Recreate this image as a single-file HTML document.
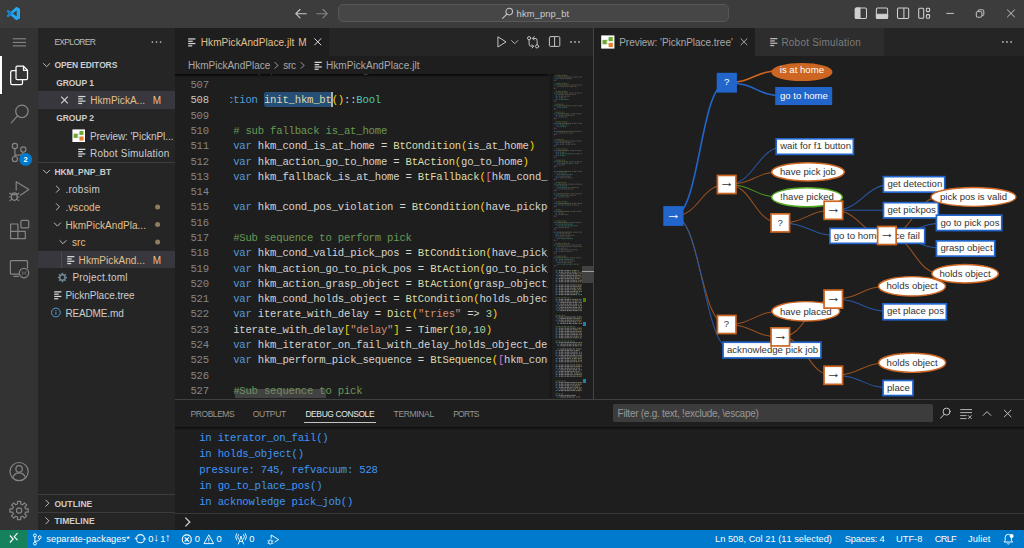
<!DOCTYPE html><html lang="en"><head><meta charset="utf-8"><title>hkm_pnp_bt - Visual Studio Code</title><style>

html,body{margin:0;padding:0;background:#1e1e1e;}
body{width:1024px;height:548px;overflow:hidden;position:relative;font-family:"Liberation Sans",sans-serif;font-kerning:none;}
.b{position:absolute;}
.t{position:absolute;white-space:pre;line-height:20px;height:20px;}
.m{font-family:"Liberation Mono",monospace;font-size:10.6px;letter-spacing:-0.200px;}
svg.ov{position:absolute;left:0;top:0;}
svg text{font-family:"Liberation Sans",sans-serif;}

</style></head><body>
<div class="b" style="left:0.00px;top:0.00px;width:1024.00px;height:28.00px;background:#3c3c3c;"></div>
<div class="b" style="left:0.00px;top:28.00px;width:38.40px;height:501.80px;background:#333333;"></div>
<div class="b" style="left:38.40px;top:28.00px;width:136.60px;height:501.80px;background:#252526;"></div>
<div class="b" style="left:175.00px;top:28.00px;width:849.00px;height:501.80px;background:#1e1e1e;"></div>
<div class="b" style="left:175.00px;top:28.00px;width:418.60px;height:28.00px;background:#252526;"></div>
<div class="b" style="left:594.40px;top:28.00px;width:429.60px;height:28.00px;background:#252526;"></div>
<div class="b" style="left:593.40px;top:28.00px;width:1.10px;height:370.70px;background:#444444;"></div>
<div class="b" style="left:0.00px;top:529.80px;width:1024.00px;height:18.20px;background:#007acc;"></div>
<div class="b" style="left:0.00px;top:529.80px;width:27.20px;height:18.20px;background:#16825d;"></div>
<div class="b" style="left:338.20px;top:3.90px;width:391.20px;height:18.60px;background:#464646;border:1px solid #585858;border-radius:5px;box-sizing:border-box;"></div>
<span class="t" style="left:516.60px;top:3.60px;font-size:9.3px;color:#cccccc;letter-spacing:0.151px;">hkm_pnp_bt</span>
<div class="b" style="left:0.00px;top:56.00px;width:1.70px;height:38.40px;background:#ffffff;"></div>
<span class="t" style="left:54.40px;top:32.30px;font-size:8.5px;color:#bbbbbb;letter-spacing:-0.687px;">EXPLORER</span>
<div class="b" style="left:38.40px;top:91.20px;width:136.60px;height:17.60px;background:#37373d;"></div>
<div class="b" style="left:38.40px;top:250.60px;width:136.60px;height:17.60px;background:#37373d;"></div>
<div class="b" style="left:38.40px;top:162.20px;width:136.60px;height:0.80px;background:#3c3c3c;"></div>
<span class="t" style="left:54.40px;top:55.10px;font-size:8.5px;color:#cccccc;font-weight:700;letter-spacing:-0.119px;">OPEN EDITORS</span>
<span class="t" style="left:56.20px;top:72.70px;font-size:8.5px;color:#cccccc;font-weight:700;letter-spacing:-0.065px;">GROUP 1</span>
<span class="t" style="left:90.30px;top:91.30px;font-size:10.0px;color:#e2c08d;letter-spacing:0.023px;">HkmPickA...</span>
<span class="t" style="left:152.80px;top:91.30px;font-size:10.0px;color:#e2c08d;letter-spacing:1.070px;">M</span>
<span class="t" style="left:56.20px;top:107.90px;font-size:8.5px;color:#cccccc;font-weight:700;letter-spacing:-0.065px;">GROUP 2</span>
<span class="t" style="left:90.00px;top:126.50px;font-size:10.0px;color:#cccccc;letter-spacing:-0.066px;">Preview: 'PicknPl...</span>
<span class="t" style="left:90.00px;top:144.10px;font-size:10.0px;color:#cccccc;letter-spacing:0.215px;">Robot Simulation</span>
<span class="t" style="left:54.40px;top:161.70px;font-size:8.5px;color:#cccccc;font-weight:700;letter-spacing:-0.102px;">HKM_PNP_BT</span>
<span class="t" style="left:65.40px;top:180.30px;font-size:10.0px;color:#cccccc;letter-spacing:0.260px;">.robsim</span>
<span class="t" style="left:65.40px;top:197.90px;font-size:10.0px;color:#e2c08d;letter-spacing:0.077px;">.vscode</span>
<span class="t" style="left:65.40px;top:215.50px;font-size:10.0px;color:#e2c08d;letter-spacing:0.036px;">HkmPickAndPla...</span>
<span class="t" style="left:72.00px;top:233.10px;font-size:10.0px;color:#e2c08d;letter-spacing:0.023px;">src</span>
<div class="b" style="left:61.20px;top:250.60px;width:0.70px;height:17.60px;background:#4a4a4a;"></div>
<span class="t" style="left:78.60px;top:250.70px;font-size:10.0px;color:#e2c08d;letter-spacing:0.064px;">HkmPickAnd...</span>
<span class="t" style="left:152.80px;top:250.70px;font-size:10.0px;color:#e2c08d;letter-spacing:1.070px;">M</span>
<span class="t" style="left:72.40px;top:268.30px;font-size:10.0px;color:#cccccc;letter-spacing:0.217px;">Project.toml</span>
<span class="t" style="left:65.40px;top:285.90px;font-size:10.0px;color:#cccccc;letter-spacing:-0.019px;">PicknPlace.tree</span>
<span class="t" style="left:65.40px;top:303.50px;font-size:10.0px;color:#cccccc;letter-spacing:-0.139px;">README.md</span>
<div class="b" style="left:38.40px;top:494.00px;width:136.60px;height:0.80px;background:#3c3c3c;"></div>
<div class="b" style="left:38.40px;top:511.60px;width:136.60px;height:0.80px;background:#3c3c3c;"></div>
<span class="t" style="left:54.40px;top:493.90px;font-size:8.5px;color:#cccccc;font-weight:700;letter-spacing:0.099px;">OUTLINE</span>
<span class="t" style="left:54.40px;top:511.00px;font-size:8.5px;color:#cccccc;font-weight:700;letter-spacing:0.092px;">TIMELINE</span>
<div class="b" style="left:175.00px;top:28.00px;width:153.60px;height:28.00px;background:#1e1e1e;"></div>
<span class="t" style="left:200.80px;top:33.00px;font-size:10.0px;color:#e2c08d;letter-spacing:0.071px;">HkmPickAndPlace.jlt</span>
<span class="t" style="left:298.20px;top:33.00px;font-size:10.0px;color:#e2c08d;letter-spacing:0.870px;">M</span>
<span class="t" style="left:188.00px;top:55.80px;font-size:10.0px;color:#a9a9a9;">HkmPickAndPlace</span>
<span class="t" style="left:283.20px;top:55.80px;font-size:10.0px;color:#a9a9a9;letter-spacing:-0.310px;">src</span>
<span class="t" style="left:326.00px;top:55.80px;font-size:10.0px;color:#a9a9a9;letter-spacing:0.071px;">HkmPickAndPlace.jlt</span>
<div class="b" style="left:229.6px;top:73.6px;width:318.00px;height:324.80px;overflow:hidden;"><div class="b" style="left:34.34px;top:18.70px;width:67.76px;height:14.4px;background:#264f78;border-radius:2.4px;"></div><div class="b" style="left:101.90px;top:18.70px;width:1.5px;height:14.4px;background:#aeafad;"></div><span class="t m" style="left:-21.10px;top:-13.81px;"><span style="color:#d4d4d4">    hkm_pnp_tree = nothing   # set in init_hkm_bt</span></span><span class="t m" style="left:-21.10px;top:16.77px;"><span style="color:#569cd6">function</span><span style="color:#d4d4d4"> </span><span style="color:#dcdcaa">init_hkm_bt</span><span style="color:#ffd700">()</span><span style="color:#d4d4d4">::</span><span style="color:#4ec9b0">Bool</span></span><span class="t m" style="left:-21.10px;top:47.35px;"><span style="color:#6a9955">    # sub fallback is_at_home</span></span><span class="t m" style="left:-21.10px;top:62.64px;"><span style="color:#569cd6">    var</span><span style="color:#d4d4d4"> hkm_cond_is_at_home = </span><span style="color:#dcdcaa">BtCondition</span><span style="color:#ffd700">(</span><span style="color:#d4d4d4">is_at_home</span><span style="color:#ffd700">)</span></span><span class="t m" style="left:-21.10px;top:77.93px;"><span style="color:#569cd6">    var</span><span style="color:#d4d4d4"> hkm_action_go_to_home = </span><span style="color:#dcdcaa">BtAction</span><span style="color:#ffd700">(</span><span style="color:#d4d4d4">go_to_home</span><span style="color:#ffd700">)</span></span><span class="t m" style="left:-21.10px;top:93.22px;"><span style="color:#569cd6">    var</span><span style="color:#d4d4d4"> hkm_fallback_is_at_home = </span><span style="color:#dcdcaa">BtFallback</span><span style="color:#ffd700">(</span><span style="color:#da70d6">[</span><span style="color:#d4d4d4">hkm_cond_is_at_home, hkm_action_go_to_home</span><span style="color:#da70d6">]</span><span style="color:#ffd700">)</span></span><span class="t m" style="left:-21.10px;top:123.80px;"><span style="color:#569cd6">    var</span><span style="color:#d4d4d4"> hkm_cond_pos_violation = </span><span style="color:#dcdcaa">BtCondition</span><span style="color:#ffd700">(</span><span style="color:#d4d4d4">have_pickpos_violation</span><span style="color:#ffd700">)</span></span><span class="t m" style="left:-21.10px;top:154.38px;"><span style="color:#6a9955">    #Sub sequence to perform pick</span></span><span class="t m" style="left:-21.10px;top:169.67px;"><span style="color:#569cd6">    var</span><span style="color:#d4d4d4"> hkm_cond_valid_pick_pos = </span><span style="color:#dcdcaa">BtCondition</span><span style="color:#ffd700">(</span><span style="color:#d4d4d4">have_pick_pos_is_valid</span><span style="color:#ffd700">)</span></span><span class="t m" style="left:-21.10px;top:184.96px;"><span style="color:#569cd6">    var</span><span style="color:#d4d4d4"> hkm_action_go_to_pick_pos = </span><span style="color:#dcdcaa">BtAction</span><span style="color:#ffd700">(</span><span style="color:#d4d4d4">go_to_pick_pos</span><span style="color:#ffd700">)</span></span><span class="t m" style="left:-21.10px;top:200.25px;"><span style="color:#569cd6">    var</span><span style="color:#d4d4d4"> hkm_action_grasp_object = </span><span style="color:#dcdcaa">BtAction</span><span style="color:#ffd700">(</span><span style="color:#d4d4d4">grasp_object_at_pick</span><span style="color:#ffd700">)</span></span><span class="t m" style="left:-21.10px;top:215.54px;"><span style="color:#569cd6">    var</span><span style="color:#d4d4d4"> hkm_cond_holds_object = </span><span style="color:#dcdcaa">BtCondition</span><span style="color:#ffd700">(</span><span style="color:#d4d4d4">holds_object_now</span><span style="color:#ffd700">)</span></span><span class="t m" style="left:-21.10px;top:230.83px;"><span style="color:#569cd6">    var</span><span style="color:#d4d4d4"> iterate_with_delay = </span><span style="color:#dcdcaa">Dict</span><span style="color:#ffd700">(</span><span style="color:#ce9178">"tries"</span><span style="color:#d4d4d4"> =&gt; </span><span style="color:#b5cea8">3</span><span style="color:#ffd700">)</span></span><span class="t m" style="left:-21.10px;top:246.12px;"><span style="color:#d4d4d4">    iterate_with_delay</span><span style="color:#ffd700">[</span><span style="color:#ce9178">"delay"</span><span style="color:#ffd700">]</span><span style="color:#d4d4d4"> = </span><span style="color:#dcdcaa">Timer</span><span style="color:#ffd700">(</span><span style="color:#b5cea8">10</span><span style="color:#d4d4d4">,</span><span style="color:#b5cea8">10</span><span style="color:#ffd700">)</span></span><span class="t m" style="left:-21.10px;top:261.41px;"><span style="color:#569cd6">    var</span><span style="color:#d4d4d4"> hkm_iterator_on_fail_with_delay_holds_object_delayed = </span><span style="color:#dcdcaa">BtIterator</span><span style="color:#ffd700">(</span><span style="color:#d4d4d4">x</span><span style="color:#ffd700">)</span></span><span class="t m" style="left:-21.10px;top:276.70px;"><span style="color:#569cd6">    var</span><span style="color:#d4d4d4"> hkm_perform_pick_sequence = </span><span style="color:#dcdcaa">BtSequence</span><span style="color:#ffd700">(</span><span style="color:#da70d6">[</span><span style="color:#d4d4d4">hkm_cond_valid_pick_pos, hkm_action_go_to_pick_pos</span><span style="color:#da70d6">]</span><span style="color:#ffd700">)</span></span><span class="t m" style="left:-21.10px;top:307.28px;"><span style="color:#6a9955">    #Sub sequence to pick</span></span></div>
<span class="t" style="left:190.40px;top:75.08px;font-size:10.6px;color:#858585;font-family:'Liberation Mono',monospace;letter-spacing:-0.200px;">507</span>
<span class="t" style="left:190.40px;top:90.37px;font-size:10.6px;color:#c6c6c6;font-family:'Liberation Mono',monospace;letter-spacing:-0.200px;">508</span>
<span class="t" style="left:190.40px;top:105.66px;font-size:10.6px;color:#858585;font-family:'Liberation Mono',monospace;letter-spacing:-0.200px;">509</span>
<span class="t" style="left:190.40px;top:120.95px;font-size:10.6px;color:#858585;font-family:'Liberation Mono',monospace;letter-spacing:-0.200px;">510</span>
<span class="t" style="left:190.40px;top:136.24px;font-size:10.6px;color:#858585;font-family:'Liberation Mono',monospace;letter-spacing:-0.200px;">511</span>
<span class="t" style="left:190.40px;top:151.53px;font-size:10.6px;color:#858585;font-family:'Liberation Mono',monospace;letter-spacing:-0.200px;">512</span>
<span class="t" style="left:190.40px;top:166.82px;font-size:10.6px;color:#858585;font-family:'Liberation Mono',monospace;letter-spacing:-0.200px;">513</span>
<span class="t" style="left:190.40px;top:182.11px;font-size:10.6px;color:#858585;font-family:'Liberation Mono',monospace;letter-spacing:-0.200px;">514</span>
<span class="t" style="left:190.40px;top:197.40px;font-size:10.6px;color:#858585;font-family:'Liberation Mono',monospace;letter-spacing:-0.200px;">515</span>
<span class="t" style="left:190.40px;top:212.69px;font-size:10.6px;color:#858585;font-family:'Liberation Mono',monospace;letter-spacing:-0.200px;">516</span>
<span class="t" style="left:190.40px;top:227.98px;font-size:10.6px;color:#858585;font-family:'Liberation Mono',monospace;letter-spacing:-0.200px;">517</span>
<span class="t" style="left:190.40px;top:243.27px;font-size:10.6px;color:#858585;font-family:'Liberation Mono',monospace;letter-spacing:-0.200px;">518</span>
<span class="t" style="left:190.40px;top:258.56px;font-size:10.6px;color:#858585;font-family:'Liberation Mono',monospace;letter-spacing:-0.200px;">519</span>
<span class="t" style="left:190.40px;top:273.85px;font-size:10.6px;color:#858585;font-family:'Liberation Mono',monospace;letter-spacing:-0.200px;">520</span>
<span class="t" style="left:190.40px;top:289.14px;font-size:10.6px;color:#858585;font-family:'Liberation Mono',monospace;letter-spacing:-0.200px;">521</span>
<span class="t" style="left:190.40px;top:304.43px;font-size:10.6px;color:#858585;font-family:'Liberation Mono',monospace;letter-spacing:-0.200px;">522</span>
<span class="t" style="left:190.40px;top:319.72px;font-size:10.6px;color:#858585;font-family:'Liberation Mono',monospace;letter-spacing:-0.200px;">523</span>
<span class="t" style="left:190.40px;top:335.01px;font-size:10.6px;color:#858585;font-family:'Liberation Mono',monospace;letter-spacing:-0.200px;">524</span>
<span class="t" style="left:190.40px;top:350.30px;font-size:10.6px;color:#858585;font-family:'Liberation Mono',monospace;letter-spacing:-0.200px;">525</span>
<span class="t" style="left:190.40px;top:365.59px;font-size:10.6px;color:#858585;font-family:'Liberation Mono',monospace;letter-spacing:-0.200px;">526</span>
<span class="t" style="left:190.40px;top:380.88px;font-size:10.6px;color:#858585;font-family:'Liberation Mono',monospace;letter-spacing:-0.200px;">527</span>
<div class="b" style="left:175px;top:73.6px;width:377.6px;height:3px;background:linear-gradient(#000000cc,#00000000);"></div>
<div class="b" style="left:235.00px;top:389.00px;width:91.40px;height:9.40px;background:rgba(121,121,121,0.4);"></div>
<div class="b" style="left:547.6px;top:73.6px;width:4.4px;height:324.8px;background:linear-gradient(90deg,#1e1e1e,#161616);"></div>
<div class="b" style="left:582.40px;top:266.40px;width:11.20px;height:16.40px;background:#424242;"></div>
<div class="b" style="left:582.40px;top:270.60px;width:11.20px;height:1.00px;background:#a0a0a0;"></div>
<div class="b" style="left:583.20px;top:298.40px;width:2.80px;height:4.00px;background:#487e02;"></div>
<div class="b" style="left:583.20px;top:321.60px;width:2.80px;height:4.00px;background:#1b81a8;"></div>
<div class="b" style="left:583.20px;top:379.00px;width:2.80px;height:4.00px;background:#1b81a8;"></div>
<div class="b" style="left:594.40px;top:28.00px;width:160.90px;height:28.00px;background:#1e1e1e;"></div>
<span class="t" style="left:619.20px;top:32.90px;font-size:10.0px;color:#a8a8a8;letter-spacing:-0.031px;">Preview: 'PicknPlace.tree'</span>
<div class="b" style="left:755.30px;top:28.00px;width:128.30px;height:28.00px;background:#2d2d2d;"></div>
<span class="t" style="left:781.40px;top:32.90px;font-size:10.0px;color:#7b7b7b;letter-spacing:0.215px;">Robot Simulation</span>
<svg class="ov" style="left:594.4px;top:56px" width="429.6" height="342.4" viewBox="594.4 56 429.6 342.4"><g fill="none"><path d="M673.8 216.0 C700.5 216.0 700.5 82.7 727.2 82.7" stroke="#2266cc" stroke-width="1.6"/><path d="M673.8 216.0 C700.5 216.0 700.5 184.5 727.1 184.5" stroke="#9a501f" stroke-width="1.05"/><path d="M673.8 216.0 C700.5 216.0 700.5 324.5 727.1 324.5" stroke="#9a501f" stroke-width="1.05"/><path d="M673.8 216.0 C703.2 216.0 703.2 350.1 732.7 350.1" stroke="#2857a4" stroke-width="1.05"/><path d="M727.2 82.7 C754.7 82.7 754.7 70.5 782.1 70.5" stroke="#cc6622" stroke-width="1.6"/><path d="M727.2 82.7 C756.5 82.7 756.5 96.0 785.7 96.0" stroke="#2266cc" stroke-width="1.6"/><path d="M727.1 184.5 C756.5 184.5 756.5 146.6 785.9 146.6" stroke="#2857a4" stroke-width="1.05"/><path d="M727.1 184.5 C754.4 184.5 754.4 171.9 781.7 171.9" stroke="#9a501f" stroke-width="1.05"/><path d="M727.1 184.5 C754.4 184.5 754.4 197.3 781.7 197.3" stroke="#4c9a1e" stroke-width="1.05"/><path d="M727.1 184.5 C753.9 184.5 753.9 222.9 780.7 222.9" stroke="#9a501f" stroke-width="1.05"/><path d="M780.7 222.9 C807.2 222.9 807.2 210.3 833.8 210.3" stroke="#9a501f" stroke-width="1.05"/><path d="M780.7 222.9 C810.1 222.9 810.1 235.8 839.5 235.8" stroke="#2857a4" stroke-width="1.05"/><path d="M833.8 210.3 C863.5 210.3 863.5 184.4 893.1 184.4" stroke="#2857a4" stroke-width="1.05"/><path d="M833.8 210.3 C863.5 210.3 863.5 210.3 893.1 210.3" stroke="#2857a4" stroke-width="1.05"/><path d="M833.8 210.3 C860.6 210.3 860.6 235.5 887.3 235.5" stroke="#9a501f" stroke-width="1.05"/><path d="M887.3 235.5 C914.2 235.5 914.2 196.9 941.1 196.9" stroke="#9a501f" stroke-width="1.05"/><path d="M887.3 235.5 C916.7 235.5 916.7 222.9 946.1 222.9" stroke="#2857a4" stroke-width="1.05"/><path d="M887.3 235.5 C916.7 235.5 916.7 248.5 946.1 248.5" stroke="#2857a4" stroke-width="1.05"/><path d="M887.3 235.5 C914.6 235.5 914.6 273.7 941.9 273.7" stroke="#9a501f" stroke-width="1.05"/><path d="M727.1 324.5 C754.5 324.5 754.5 311.3 781.9 311.3" stroke="#9a501f" stroke-width="1.05"/><path d="M727.1 324.5 C753.9 324.5 753.9 336.9 780.7 336.9" stroke="#9a501f" stroke-width="1.05"/><path d="M780.7 336.9 C807.2 336.9 807.2 299.1 833.7 299.1" stroke="#9a501f" stroke-width="1.05"/><path d="M780.7 336.9 C807.2 336.9 807.2 375.3 833.7 375.3" stroke="#9a501f" stroke-width="1.05"/><path d="M833.7 299.1 C861.1 299.1 861.1 286.3 888.5 286.3" stroke="#9a501f" stroke-width="1.05"/><path d="M833.7 299.1 C863.2 299.1 863.2 311.8 892.7 311.8" stroke="#2857a4" stroke-width="1.05"/><path d="M833.7 375.3 C861.2 375.3 861.2 362.8 888.7 362.8" stroke="#9a501f" stroke-width="1.05"/><path d="M833.7 375.3 C863.2 375.3 863.2 388.0 892.7 388.0" stroke="#2857a4" stroke-width="1.05"/></g><rect x="664.55" y="206.95" width="18.50" height="18.10" fill="#2266cc" stroke="#2266cc" stroke-width="1.7"/><text x="673.80" y="218.90" font-size="14.7" fill="#ffffff" text-anchor="middle">→</text><rect x="717.95" y="73.65" width="18.50" height="18.10" fill="#2266cc" stroke="#2266cc" stroke-width="1.7"/><text x="727.00" y="85.50" font-size="9.6" fill="#ffffff" text-anchor="middle">?</text><ellipse cx="802.30" cy="72.10" rx="29.88" ry="8.27" fill="#cc6622" stroke="#cc6622" stroke-width="1.45"/><text x="802.30" y="72.70" font-size="9.6" fill="#ffffff" text-anchor="middle">is at home</text><rect x="776.45" y="87.85" width="55.30" height="16.30" fill="#2266cc" stroke="#2266cc" stroke-width="1.7"/><text x="780.40" y="98.70" font-size="9.6" fill="#ffffff">go to home</text><rect x="717.85" y="175.45" width="18.50" height="18.10" fill="#ffffff" stroke="#cc6622" stroke-width="1.7"/><text x="727.10" y="187.40" font-size="14.7" fill="#333333" text-anchor="middle">→</text><rect x="776.65" y="138.85" width="77.10" height="15.50" fill="#ffffff" stroke="#2266cc" stroke-width="1.7"/><text x="780.60" y="149.30" font-size="9.6" fill="#333333">wait for f1 button</text><ellipse cx="808.40" cy="171.90" rx="36.38" ry="9.07" fill="#ffffff" stroke="#cc6622" stroke-width="1.45"/><text x="808.40" y="175.40" font-size="9.6" fill="#333333" text-anchor="middle">have pick job</text><ellipse cx="807.40" cy="197.30" rx="35.38" ry="9.48" fill="#ffffff" stroke="#55aa22" stroke-width="1.45"/><text x="807.40" y="200.10" font-size="9.6" fill="#333333" text-anchor="middle">!have picked</text><rect x="771.45" y="213.85" width="18.50" height="18.10" fill="#ffffff" stroke="#cc6622" stroke-width="1.7"/><text x="780.50" y="225.70" font-size="9.6" fill="#333333" text-anchor="middle">?</text><rect x="824.55" y="201.25" width="18.50" height="18.10" fill="#ffffff" stroke="#cc6622" stroke-width="1.7"/><text x="833.80" y="213.20" font-size="14.7" fill="#333333" text-anchor="middle">→</text><rect x="883.85" y="176.65" width="61.30" height="15.50" fill="#ffffff" stroke="#2266cc" stroke-width="1.7"/><text x="887.80" y="187.10" font-size="9.6" fill="#333333">get detection</text><rect x="883.85" y="202.65" width="54.90" height="15.30" fill="#ffffff" stroke="#2266cc" stroke-width="1.7"/><text x="887.80" y="213.00" font-size="9.6" fill="#333333">get pickpos</text><rect x="830.25" y="228.35" width="55.30" height="15.00" fill="#ffffff" stroke="#2266cc" stroke-width="1.7"/><text x="834.20" y="238.55" font-size="9.6" fill="#333333">go to home</text><rect x="878.45" y="228.35" width="46.70" height="15.00" fill="#ffffff" stroke="#2266cc" stroke-width="1.7"/><text x="882.40" y="238.55" font-size="9.6" fill="#333333">place fail</text><rect x="878.05" y="226.45" width="18.50" height="18.10" fill="#ffffff" stroke="#cc6622" stroke-width="1.7"/><text x="887.30" y="238.40" font-size="14.7" fill="#333333" text-anchor="middle">→</text><ellipse cx="973.90" cy="196.90" rx="42.47" ry="9.48" fill="#ffffff" stroke="#cc6622" stroke-width="1.45"/><text x="973.90" y="200.40" font-size="9.6" fill="#333333" text-anchor="middle">pick pos is valid</text><rect x="936.85" y="215.15" width="65.30" height="15.40" fill="#ffffff" stroke="#2266cc" stroke-width="1.7"/><text x="940.80" y="225.55" font-size="9.6" fill="#333333">go to pick pos</text><rect x="936.85" y="240.85" width="58.30" height="15.30" fill="#ffffff" stroke="#2266cc" stroke-width="1.7"/><text x="940.80" y="251.20" font-size="9.6" fill="#333333">grasp object</text><ellipse cx="965.50" cy="273.70" rx="33.28" ry="9.28" fill="#ffffff" stroke="#cc6622" stroke-width="1.45"/><text x="965.50" y="277.20" font-size="9.6" fill="#333333" text-anchor="middle">holds object</text><rect x="717.85" y="315.45" width="18.50" height="18.10" fill="#ffffff" stroke="#cc6622" stroke-width="1.7"/><text x="726.90" y="327.30" font-size="9.6" fill="#333333" text-anchor="middle">?</text><ellipse cx="806.20" cy="311.30" rx="33.98" ry="9.68" fill="#ffffff" stroke="#cc6622" stroke-width="1.45"/><text x="806.20" y="314.80" font-size="9.6" fill="#333333" text-anchor="middle">have placed</text><rect x="723.45" y="342.25" width="97.90" height="15.70" fill="#ffffff" stroke="#2266cc" stroke-width="1.7"/><text x="727.40" y="352.80" font-size="9.6" fill="#333333">acknowledge pick job</text><rect x="771.45" y="327.85" width="18.50" height="18.10" fill="#ffffff" stroke="#cc6622" stroke-width="1.7"/><text x="780.70" y="339.80" font-size="14.7" fill="#333333" text-anchor="middle">→</text><rect x="824.45" y="290.05" width="18.50" height="18.10" fill="#ffffff" stroke="#cc6622" stroke-width="1.7"/><text x="833.70" y="302.00" font-size="14.7" fill="#333333" text-anchor="middle">→</text><ellipse cx="912.40" cy="286.30" rx="33.57" ry="9.68" fill="#ffffff" stroke="#cc6622" stroke-width="1.45"/><text x="912.40" y="289.00" font-size="9.6" fill="#333333" text-anchor="middle">holds object</text><rect x="883.45" y="303.85" width="63.30" height="15.90" fill="#ffffff" stroke="#2266cc" stroke-width="1.7"/><text x="887.40" y="314.50" font-size="9.6" fill="#333333">get place pos</text><rect x="824.45" y="366.25" width="18.50" height="18.10" fill="#ffffff" stroke="#cc6622" stroke-width="1.7"/><text x="833.70" y="378.20" font-size="14.7" fill="#333333" text-anchor="middle">→</text><ellipse cx="912.60" cy="362.80" rx="33.57" ry="9.58" fill="#ffffff" stroke="#cc6622" stroke-width="1.45"/><text x="912.60" y="366.30" font-size="9.6" fill="#333333" text-anchor="middle">holds object</text><rect x="883.45" y="380.45" width="29.90" height="15.10" fill="#ffffff" stroke="#2266cc" stroke-width="1.7"/><text x="887.40" y="390.70" font-size="9.6" fill="#333333">place</text></svg>
<div class="b" style="left:175.00px;top:398.70px;width:849.00px;height:0.80px;background:#404040;"></div>
<span class="t" style="left:190.60px;top:404.40px;font-size:8.5px;color:#969696;letter-spacing:-0.454px;">PROBLEMS</span>
<span class="t" style="left:252.80px;top:404.40px;font-size:8.5px;color:#969696;letter-spacing:-0.290px;">OUTPUT</span>
<span class="t" style="left:305.40px;top:404.40px;font-size:8.5px;color:#e7e7e7;letter-spacing:-0.412px;">DEBUG CONSOLE</span>
<span class="t" style="left:393.60px;top:404.40px;font-size:8.5px;color:#969696;letter-spacing:-0.347px;">TERMINAL</span>
<span class="t" style="left:453.20px;top:404.40px;font-size:8.5px;color:#969696;letter-spacing:-0.736px;">PORTS</span>
<div class="b" style="left:304.00px;top:422.10px;width:72.00px;height:0.80px;background:#c4c4c4;"></div>
<div class="b" style="left:612.60px;top:404.20px;width:320.40px;height:18.00px;background:#3c3c3c;border-radius:1.5px;"></div>
<span class="t" style="left:617.60px;top:404.30px;font-size:10.0px;color:#989898;letter-spacing:-0.260px;">Filter (e.g. text, !exclude, \escape)</span>
<div class="b" style="left:175px;top:427.2px;width:849px;height:3px;background:linear-gradient(#00000099,#00000000);"></div>
<span class="t" style="left:199.20px;top:427.88px;font-size:10.6px;color:#3f96f6;font-family:'Liberation Mono',monospace;letter-spacing:-0.200px;">in iterator_on_fail()</span>
<span class="t" style="left:199.20px;top:443.98px;font-size:10.6px;color:#3f96f6;font-family:'Liberation Mono',monospace;letter-spacing:-0.200px;">in holds_object()</span>
<span class="t" style="left:199.20px;top:460.08px;font-size:10.6px;color:#3f96f6;font-family:'Liberation Mono',monospace;letter-spacing:-0.200px;">pressure: 745, refvacuum: 528</span>
<span class="t" style="left:199.20px;top:476.18px;font-size:10.6px;color:#3f96f6;font-family:'Liberation Mono',monospace;letter-spacing:-0.200px;">in go_to_place_pos()</span>
<span class="t" style="left:199.20px;top:492.28px;font-size:10.6px;color:#3f96f6;font-family:'Liberation Mono',monospace;letter-spacing:-0.200px;">in acknowledge pick_job()</span>
<div class="b" style="left:175.00px;top:513.10px;width:849.00px;height:0.80px;background:#3a3a3a;"></div>
<span class="t" style="left:46.20px;top:529.40px;font-size:9.3px;color:#ffffff;letter-spacing:0.060px;">separate-packages*</span>
<span class="t" style="left:148.20px;top:529.40px;font-size:9.3px;color:#ffffff;">0</span>
<span class="t" style="left:153.60px;top:527.40px;font-size:11px;color:#ffffff;font-weight:700;">↓</span>
<span class="t" style="left:160.20px;top:529.40px;font-size:9.3px;color:#ffffff;">1</span>
<span class="t" style="left:165.00px;top:527.40px;font-size:11px;color:#ffffff;font-weight:700;">↑</span>
<span class="t" style="left:194.80px;top:529.40px;font-size:9.3px;color:#ffffff;">0</span>
<span class="t" style="left:216.60px;top:529.40px;font-size:9.3px;color:#ffffff;">0</span>
<span class="t" style="left:249.20px;top:529.40px;font-size:9.3px;color:#ffffff;">0</span>
<span class="t" style="left:715.00px;top:529.40px;font-size:9.3px;color:#ffffff;letter-spacing:0.006px;">Ln 508, Col 21 (11 selected)</span>
<span class="t" style="left:844.80px;top:529.40px;font-size:9.3px;color:#ffffff;letter-spacing:-0.196px;">Spaces: 4</span>
<span class="t" style="left:896.00px;top:529.40px;font-size:9.3px;color:#ffffff;letter-spacing:0.011px;">UTF-8</span>
<span class="t" style="left:934.80px;top:529.40px;font-size:9.3px;color:#ffffff;letter-spacing:-0.771px;">CRLF</span>
<span class="t" style="left:968.00px;top:529.40px;font-size:9.3px;color:#ffffff;letter-spacing:0.115px;">Juliet</span>
<svg class="ov" width="1024" height="548" viewBox="0 0 1024 548">
<g transform="translate(6.8,7) scale(0.55)"><path fill="#23a8f2" d="M23.15 2.587L18.21.21a1.494 1.494 0 0 0-1.705.29l-9.46 8.63-4.12-3.128a.999.999 0 0 0-1.276.057L.327 7.261A1 1 0 0 0 .326 8.74L3.899 12 .326 15.26a1 1 0 0 0 .001 1.479L1.65 17.94a.999.999 0 0 0 1.276.057l4.12-3.128 9.46 8.63a1.492 1.492 0 0 0 1.704.29l4.942-2.377A1.5 1.5 0 0 0 24 20.06V3.939a1.5 1.5 0 0 0-.85-1.352zm-5.146 14.861L10.826 12l7.178-5.448v10.896z"/><path fill="#1a7fd0" d="M7.045 9.13l-4.12-3.128a.999.999 0 0 0-1.276.057L.327 7.261A1 1 0 0 0 .326 8.74L3.899 12 .326 15.26a1 1 0 0 0 .001 1.479L1.65 17.94a.999.999 0 0 0 1.276.057l4.12-3.128L10.826 12z"/></g>
<path d="M306.2 13.7 H295.8 M300.0 9.5 L295.8 13.7 L300.0 17.9" fill="none" stroke="#c8c8c8" stroke-width="1.15" stroke-linecap="round" stroke-linejoin="round"/>
<path d="M316.8 13.7 H327.2 M323.0 9.5 L327.2 13.7 L323.0 17.9" fill="none" stroke="#858585" stroke-width="1.15" stroke-linecap="round" stroke-linejoin="round"/>
<g fill="none" stroke="#c8c8c8" stroke-width="1.05" stroke-linecap="round"><circle cx="509.2" cy="11.6" r="3.3"/><path d="M506.8 14.1 L502.6 18.4"/></g>
<g fill="none" stroke="#d0d0d0" stroke-width="1.05" stroke-linejoin="round"><rect x="855.3" y="8" width="11.2" height="10.4" rx="1.2"/><path d="M855.3 9 a1 1 0 0 1 1 -1 h3.7 v10.4 h-3.7 a1 1 0 0 1 -1 -1 z" fill="#d0d0d0"/><rect x="876.4" y="8" width="11.2" height="10.4" rx="1.2"/><path d="M876.4 14.2 h11.2 v3.2 a1 1 0 0 1 -1 1 h-9.2 a1 1 0 0 1 -1 -1 z" fill="#d0d0d0"/><rect x="897.5" y="8" width="11.2" height="10.4" rx="1.2"/><path d="M903.9 8 v10.4"/><rect x="918.7" y="8.2" width="5" height="10" rx="1"/><rect x="926.4" y="8.2" width="3.2" height="3.4" rx="0.8"/><rect x="926.4" y="14.6" width="3.2" height="3.6" rx="0.8"/></g>
<g fill="none" stroke="#cfcfcf" stroke-width="0.95"><path d="M946.4 13.4 H953.8"/><rect x="976.3" y="11.6" width="5.6" height="5.6" rx="1.2"/><path d="M978 11.6 v-0.6 a1.2 1.2 0 0 1 1.2 -1.2 h3.4 a1.2 1.2 0 0 1 1.2 1.2 v3.4 a1.2 1.2 0 0 1 -1.2 1.2 h-0.7"/><path d="M1007.2 9.6 L1014.8 17.2 M1014.8 9.6 L1007.2 17.2"/></g>
<path d="M12.8 38.8 H26 M12.8 42.4 H26 M12.8 45.9 H26" stroke="#9c9c9c" stroke-width="0.88" fill="none"/>
<g fill="none" stroke="#ffffff" stroke-width="1.25" stroke-linejoin="round" stroke-linecap="round"><path d="M17.2 66.2 h6.3 l4 4 v8.3 a1.2 1.2 0 0 1 -1.2 1.2 h-9.1 a1.2 1.2 0 0 1 -1.2 -1.2 v-11.1 a1.2 1.2 0 0 1 1.2 -1.2 z"/><path d="M23.5 66.4 v3.9 h3.9"/><path d="M16 70.6 h-3.7 a1.6 1.6 0 0 0 -1.6 1.6 v10.8 a1.6 1.6 0 0 0 1.6 1.6 h8.6 a1.6 1.6 0 0 0 1.6 -1.6 v-3.2"/></g>
<g fill="none" stroke="#858585" stroke-width="1.25" stroke-linecap="round"><circle cx="21.9" cy="111.3" r="6.2"/><path d="M17.6 115.9 L11.2 122.9"/></g>
<g fill="none" stroke="#858585" stroke-width="1.2"><circle cx="14.9" cy="146" r="2.6"/><circle cx="23.3" cy="149.4" r="2.6"/><circle cx="14.9" cy="159.1" r="2.6"/><path d="M14.9 148.6 V156.5 M23.3 152 c0 3 -3 3.2 -8.4 3.2"/></g>
<circle cx="25.7" cy="159.4" r="6.4" fill="#007acc"/>
<text x="25.7" y="162.1" font-size="7.6" font-weight="700" fill="#fff" text-anchor="middle">2</text>
<g fill="none" stroke="#858585" stroke-width="1.2" stroke-linejoin="round" stroke-linecap="round"><path d="M16.2 190 V181.8 L28.8 189.6 L20.4 195.2"/><ellipse cx="14.3" cy="196.6" rx="2.9" ry="3.7"/><path d="M11.6 194.6 h5.4 M9.8 193.2 l1.8 1.6 M18.8 193.2 l-1.8 1.6 M9.4 197 h2 M17.2 197 h2 M9.9 200.6 l1.9 -1.5 M18.7 200.6 l-1.9 -1.5"/></g>
<g fill="none" stroke="#858585" stroke-width="1.2" stroke-linejoin="round"><rect x="20.9" y="220.3" width="7.8" height="7.6" rx="1"/><path d="M10.6 224 h7.3 v7.3 h7.4 v7.4 h-14.7 z M10.6 231.3 h7.3 v7.4"/></g>
<g fill="none" stroke="#858585" stroke-width="1.2" stroke-linejoin="round" stroke-linecap="round"><path d="M19.4 274.2 h-8 a1 1 0 0 1 -1 -1 v-11.5 a1 1 0 0 1 1 -1 h15.1 a1 1 0 0 1 1 1 v6.2"/><path d="M13.8 276.3 h4.6"/><circle cx="24" cy="273.1" r="4.7"/><path d="M22.1 271.6 l1.3 1.5 l-1.3 1.5 M25.9 271.6 l-1.3 1.5 l1.3 1.5" stroke-width="0.8"/></g>
<g fill="none" stroke="#858585" stroke-width="1.2"><circle cx="19.1" cy="471.6" r="9.1"/><circle cx="19.1" cy="468.9" r="3.2"/><path d="M12.7 477.9 c1.2 -3.6 3.6 -5 6.4 -5 s5.2 1.4 6.4 5"/></g>
<g fill="none" stroke="#858585" stroke-width="1.2" stroke-linejoin="round"><path d="M17.50 501.34 L20.70 501.34 L20.66 503.99 L22.60 504.79 L24.45 502.89 L26.71 505.15 L24.81 507.00 L25.61 508.94 L28.26 508.90 L28.26 512.10 L25.61 512.06 L24.81 514.00 L26.71 515.85 L24.45 518.11 L22.60 516.21 L20.66 517.01 L20.70 519.66 L17.50 519.66 L17.54 517.01 L15.60 516.21 L13.75 518.11 L11.49 515.85 L13.39 514.00 L12.59 512.06 L9.94 512.10 L9.94 508.90 L12.59 508.94 L13.39 507.00 L11.49 505.15 L13.75 502.89 L15.60 504.79 L17.54 503.99 Z"/><circle cx="19.1" cy="510.5" r="2.6"/></g>
<g fill="#c5c5c5"><circle cx="152.4" cy="42" r="0.85"/><circle cx="156.5" cy="42" r="0.85"/><circle cx="160.6" cy="42" r="0.85"/></g>
<path d="M43.20 63.30 L46.60 66.70 L50.00 63.30" fill="none" stroke="#c5c5c5" stroke-width="0.95"/>
<path d="M61.2 96.70 l6.6 6.6 M67.8 96.70 l-6.6 6.6" stroke="#d4d4d4" stroke-width="1.15" fill="none"/>
<path d="M78.20 96.55 h7.2" stroke="#d4d7d6" stroke-width="1.25" fill="none"/>
<path d="M78.20 98.85 h4.6" stroke="#d4d7d6" stroke-width="1.25" fill="none"/>
<path d="M78.20 101.15 h7.2" stroke="#d4d7d6" stroke-width="1.25" fill="none"/>
<path d="M78.20 103.45 h4.0" stroke="#d4d7d6" stroke-width="1.25" fill="none"/>
<g transform="translate(72.4,129.4) scale(0.7875)"><rect x="0" y="0" width="16" height="16" fill="#ffffff"/><path d="M6 8.2 L9 4.5 M6 8.2 L9 11.5" stroke="#b8b8b8" stroke-width="0.9" fill="none"/><rect x="1.6" y="5.4" width="5" height="5.4" fill="#6aaa2e"/><rect x="9" y="2" width="5" height="5" fill="#6aaa2e"/><rect x="9" y="9" width="5.2" height="5.2" fill="#e2802f"/></g>
<path d="M78.20 149.35 h7.2" stroke="#d4d7d6" stroke-width="1.25" fill="none"/>
<path d="M78.20 151.65 h4.6" stroke="#d4d7d6" stroke-width="1.25" fill="none"/>
<path d="M78.20 153.95 h7.2" stroke="#d4d7d6" stroke-width="1.25" fill="none"/>
<path d="M78.20 156.25 h4.0" stroke="#d4d7d6" stroke-width="1.25" fill="none"/>
<path d="M43.20 169.90 L46.60 173.30 L50.00 169.90" fill="none" stroke="#c5c5c5" stroke-width="0.95"/>
<path d="M56.10 185.80 L59.50 189.20 L56.10 192.60" fill="none" stroke="#c5c5c5" stroke-width="0.95"/>
<path d="M56.10 203.40 L59.50 206.80 L56.10 210.20" fill="none" stroke="#c5c5c5" stroke-width="0.95"/>
<circle cx="157.6" cy="206.90" r="2.5" fill="#8f7d61"/>
<path d="M54.00 222.70 L57.40 226.10 L60.80 222.70" fill="none" stroke="#c5c5c5" stroke-width="0.95"/>
<circle cx="157.6" cy="224.50" r="2.5" fill="#8f7d61"/>
<path d="M59.60 240.30 L63.00 243.70 L66.40 240.30" fill="none" stroke="#c5c5c5" stroke-width="0.95"/>
<circle cx="157.6" cy="242.10" r="2.5" fill="#8f7d61"/>
<path d="M67.20 256.65 h7.2" stroke="#d4d7d6" stroke-width="1.25" fill="none"/>
<path d="M67.20 258.95 h4.6" stroke="#d4d7d6" stroke-width="1.25" fill="none"/>
<path d="M67.20 261.25 h7.2" stroke="#d4d7d6" stroke-width="1.25" fill="none"/>
<path d="M67.20 263.55 h4.0" stroke="#d4d7d6" stroke-width="1.25" fill="none"/>
<path d="M61.59 272.87 L63.21 272.87 L63.22 274.10 L64.23 274.52 L65.10 273.65 L66.25 274.80 L65.38 275.67 L65.80 276.68 L67.03 276.69 L67.03 278.31 L65.80 278.32 L65.38 279.33 L66.25 280.20 L65.10 281.35 L64.23 280.48 L63.22 280.90 L63.21 282.13 L61.59 282.13 L61.58 280.90 L60.57 280.48 L59.70 281.35 L58.55 280.20 L59.42 279.33 L59.00 278.32 L57.77 278.31 L57.77 276.69 L59.00 276.68 L59.42 275.67 L58.55 274.80 L59.70 273.65 L60.57 274.52 L61.58 274.10 Z M60.50 277.50 a1.9 1.9 0 1 0 3.8 0 a1.9 1.9 0 1 0 -3.8 0 Z" fill="#6d8893" fill-rule="evenodd"/>
<path d="M54.20 291.85 h7.2" stroke="#d4d7d6" stroke-width="1.25" fill="none"/>
<path d="M54.20 294.15 h4.6" stroke="#d4d7d6" stroke-width="1.25" fill="none"/>
<path d="M54.20 296.45 h7.2" stroke="#d4d7d6" stroke-width="1.25" fill="none"/>
<path d="M54.20 298.75 h4.0" stroke="#d4d7d6" stroke-width="1.25" fill="none"/>
<g><circle cx="55.9" cy="312.50" r="4.4" fill="none" stroke="#4f9fcf" stroke-width="1"/><path d="M55.9 311.70 v3 M55.9 310.00 v0.9" stroke="#4f9fcf" stroke-width="1" fill="none"/></g>
<path d="M45.50 499.80 L48.90 503.20 L45.50 506.60" fill="none" stroke="#c5c5c5" stroke-width="0.95"/>
<path d="M45.50 517.40 L48.90 520.80 L45.50 524.20" fill="none" stroke="#c5c5c5" stroke-width="0.95"/>
<path d="M188.20 38.95 h7.2" stroke="#d4d7d6" stroke-width="1.25" fill="none"/>
<path d="M188.20 41.25 h4.6" stroke="#d4d7d6" stroke-width="1.25" fill="none"/>
<path d="M188.20 43.55 h7.2" stroke="#d4d7d6" stroke-width="1.25" fill="none"/>
<path d="M188.20 45.85 h4.0" stroke="#d4d7d6" stroke-width="1.25" fill="none"/>
<path d="M314.4 38.4 l6.8 6.8 M321.2 38.4 l-6.8 6.8" stroke="#dddddd" stroke-width="1" fill="none"/>
<g fill="none" stroke="#c5c5c5" stroke-width="1" stroke-linejoin="round" stroke-linecap="round"><path d="M497.9 37.2 V47.0 L505.7 42.1 Z"/><path d="M511.6 40.6 L514.7 43.7 L517.8 40.6" stroke-width="0.9"/><circle cx="529.1" cy="38.2" r="1.6"/><circle cx="537.1" cy="46.4" r="1.6"/><path d="M529.1 39.9 V44.2 a2 2 0 0 0 2 2 h2.2 M532 44.6 l1.7 1.7 l-1.7 1.7"/><path d="M537.1 44.7 V40.4 a2 2 0 0 0 -2 -2 h-2.2 M534.2 36.6 l-1.7 1.7 l1.7 1.7"/><rect x="549.4" y="36.6" width="10.4" height="9.8" rx="1"/><path d="M554.6 36.6 v9.8"/></g>
<g fill="#c5c5c5"><circle cx="571" cy="41.9" r="0.85"/><circle cx="575" cy="41.9" r="0.85"/><circle cx="579" cy="41.9" r="0.85"/></g>
<path d="M274.69 62.17 L277.92 65.40 L274.69 68.63" fill="none" stroke="#a9a9a9" stroke-width="0.95"/>
<path d="M300.78 62.17 L304.01 65.40 L300.78 68.63" fill="none" stroke="#a9a9a9" stroke-width="0.95"/>
<path d="M314.60 62.35 h7.2" stroke="#d4d7d6" stroke-width="1.25" fill="none"/>
<path d="M314.60 64.65 h4.6" stroke="#d4d7d6" stroke-width="1.25" fill="none"/>
<path d="M314.60 66.95 h7.2" stroke="#d4d7d6" stroke-width="1.25" fill="none"/>
<path d="M314.60 69.25 h4.0" stroke="#d4d7d6" stroke-width="1.25" fill="none"/>
<g><path d="M555.6 75.4h11.9M555.6 83.4h12.9M555.6 91.4h12.4M555.6 104.2h8.4M555.6 112.2h8.5M555.6 121.8h11.7M555.6 139.4h8.5M555.6 149.0h11.9M555.6 160.2h9.4M555.6 182.6h10.6M555.6 201.8h12.2M555.6 209.8h6.3M555.6 221.0h10.7M555.6 243.4h13.8M555.6 256.2h10.5" stroke="#6a9955" stroke-opacity="0.50" stroke-width="0.95" stroke-dasharray="1.5 0.5 2.3 0.5 0.9 0.5" fill="none"/><path d="M554.0 77.0h2.4M554.0 85.0h2.4M554.0 93.0h2.4M554.0 105.8h2.4M554.0 113.8h2.4M554.0 123.4h2.4M554.0 131.4h2.4M554.0 141.0h2.4M554.0 150.6h2.4M554.0 161.8h2.4M554.0 171.4h2.4M554.0 184.2h2.4M554.0 193.8h2.4M554.0 203.4h2.4M554.0 211.4h2.4M554.0 222.6h2.4M554.0 232.2h2.4M554.0 245.0h2.4M554.0 257.8h2.4" stroke="#569cd6" stroke-opacity="0.50" stroke-width="0.95" stroke-dasharray="1.5 0.5 2.3 0.5 0.9 0.5" fill="none"/><path d="M557.2 77.0h14.8M557.2 85.0h12.3M557.2 93.0h10.8M557.2 105.8h13.6M557.2 113.8h12.9M557.2 123.4h13.7M557.2 131.4h10.2M557.2 141.0h11.9M557.2 150.6h12.1M557.2 161.8h10.8M557.2 171.4h13.8M557.2 184.2h10.1M557.2 193.8h13.1M557.2 203.4h13.8M557.2 211.4h12.8M557.2 222.6h11.4M557.2 232.2h14.9M557.2 245.0h13.0M557.2 257.8h11.5" stroke="#c0b890" stroke-opacity="0.42" stroke-width="0.95" stroke-dasharray="1.5 0.5 2.3 0.5 0.9 0.5" fill="none"/><path d="M572.8 77.0h9.2M560.0 78.6h12.1M570.3 85.0h11.7M560.5 86.6h7.4M568.8 93.0h13.2M558.7 94.6h7.3M559.0 96.2h10.9M558.8 97.8h7.2M571.6 105.8h10.4M570.9 113.8h11.1M558.9 115.4h15.4M571.7 123.4h10.3M568.2 131.4h13.8M559.1 133.0h9.0M569.9 141.0h12.1M559.7 142.6h12.6M559.8 144.2h15.9M570.1 150.6h11.9M559.7 152.2h5.6M568.8 161.8h13.2M559.2 165.0h6.2M571.8 171.4h10.2M559.1 176.2h12.4M559.9 177.8h12.9M568.1 184.2h13.9M559.1 189.0h14.6M571.1 193.8h10.9M558.7 197.0h10.7M571.8 203.4h10.2M570.8 211.4h11.2M558.5 213.0h6.2M558.8 214.6h9.6M569.4 222.6h12.6M558.6 227.4h10.6M572.9 232.2h9.1M560.0 233.8h10.9M559.6 235.4h10.2M559.1 237.0h5.0M571.0 245.0h11.0M560.8 246.6h11.6M558.9 248.2h8.5M560.3 249.8h10.2M558.9 251.4h13.6M569.5 257.8h12.5M559.0 261.0h15.9M561.8 262.6h5.2" stroke="#9a9a9a" stroke-opacity="0.40" stroke-width="0.95" stroke-dasharray="1.5 0.5 2.3 0.5 0.9 0.5" fill="none"/><path d="M555.6 78.6h3.6M557.2 86.6h2.5M555.6 94.6h2.3M555.6 96.2h2.6M555.6 97.8h2.4M555.6 99.4h2.6M557.2 107.4h3.4M555.6 115.4h2.5M555.6 117.0h2.0M555.6 125.0h3.5M557.2 126.6h2.5M555.6 133.0h2.7M555.6 142.6h3.3M555.6 144.2h3.4M555.6 152.2h3.3M555.6 153.8h3.6M555.6 155.4h3.3M557.2 163.4h2.9M555.6 165.0h2.8M555.6 173.0h2.4M557.2 174.6h2.7M555.6 176.2h2.7M555.6 177.8h3.5M555.6 185.8h3.3M557.2 187.4h3.6M555.6 189.0h2.7M555.6 195.4h3.7M555.6 197.0h2.3M555.6 205.0h2.3M555.6 213.0h2.1M555.6 214.6h2.4M555.6 224.2h2.7M557.2 225.8h3.7M555.6 227.4h2.2M555.6 233.8h3.6M555.6 235.4h3.2M555.6 237.0h2.7M557.2 238.6h3.1M557.2 246.6h2.8M555.6 248.2h2.5M555.6 249.8h3.9M555.6 251.4h2.5M555.6 259.4h2.5M555.6 261.0h2.6M557.2 262.6h3.8M557.2 264.2h2.7" stroke="#4f8fc0" stroke-opacity="0.50" stroke-width="0.95" stroke-dasharray="1.5 0.5 2.3 0.5 0.9 0.5" fill="none"/><path d="M554.0 80.2h2.4M554.0 88.2h2.4M554.0 101.0h2.4M554.0 109.0h2.4M554.0 118.6h2.4M554.0 128.2h2.4M554.0 134.6h2.4M554.0 145.8h2.4M554.0 157.0h2.4M554.0 166.6h2.4M554.0 179.4h2.4M554.0 190.6h2.4M554.0 198.6h2.4M554.0 206.6h2.4M554.0 216.2h2.4M554.0 229.0h2.4M554.0 240.2h2.4M554.0 253.0h2.4M554.0 265.8h2.4" stroke="#c586c0" stroke-opacity="0.50" stroke-width="0.95" stroke-dasharray="1.5 0.5 2.3 0.5 0.9 0.5" fill="none"/><path d="M568.7 86.6h8.5M566.8 94.6h8.9M568.9 133.0h4.7M575.0 153.8h7.0M574.3 163.4h4.6M570.4 187.4h8.6M569.0 195.4h7.0M571.4 205.0h7.6M570.6 235.4h3.8M564.9 237.0h6.4M573.1 246.6h8.9M571.3 249.8h6.7M567.7 262.6h4.7M574.5 264.2h5.1" stroke="#c08a60" stroke-opacity="0.40" stroke-width="0.95" stroke-dasharray="1.5 0.5 2.3 0.5 0.9 0.5" fill="none"/><path d="M559.0 99.4h9.6M561.4 107.4h5.7M558.4 117.0h9.0M559.9 125.0h8.8M560.5 126.6h6.2M560.0 153.8h14.2M559.7 155.4h6.2M560.9 163.4h12.6M558.8 173.0h8.0M560.7 174.6h12.6M559.7 185.8h8.2M561.6 187.4h8.0M560.1 195.4h8.1M558.7 205.0h11.9M559.1 224.2h14.4M561.7 225.8h15.6M561.1 238.6h11.9M558.9 259.4h14.3M560.7 264.2h13.0" stroke="#4ec9b0" stroke-opacity="0.40" stroke-width="0.95" stroke-dasharray="1.5 0.5 2.3 0.5 0.9 0.5" fill="none"/><path d="M555.6 270.6h2.4M555.6 272.2h2.4M557.2 273.8h2.4M555.6 275.4h2.4M557.2 277.0h2.4M555.6 278.6h2.4M555.6 280.2h2.4M555.6 281.8h2.4M555.6 285.0h2.4M555.6 286.6h2.4M555.6 288.2h2.4M555.6 289.8h2.4M555.6 291.4h2.4M555.6 293.0h2.4M555.6 294.6h2.4M555.6 299.4h2.4M555.6 301.0h2.4M557.2 302.6h2.4M557.2 304.2h2.4M555.6 305.8h2.4M557.2 307.4h2.4M555.6 309.0h2.4M557.2 310.6h2.4M555.6 317.0h2.4M557.2 318.6h2.4M555.6 320.2h2.4M557.2 321.8h2.4M557.2 323.4h2.4M555.6 328.2h2.4M555.6 329.8h2.4M555.6 331.4h2.4M555.6 333.0h2.4M555.6 334.6h2.4M555.6 336.2h2.4M555.6 337.8h2.4M555.6 342.6h2.4M557.2 344.2h2.4M557.2 345.8h2.4M557.2 349.0h2.4M555.6 350.6h2.4M555.6 352.2h2.4M555.6 353.8h2.4M555.6 355.4h2.4M557.2 357.0h2.4M555.6 358.6h2.4M555.6 360.2h2.4M555.6 361.8h2.4M555.6 365.0h2.4M555.6 366.6h2.4M555.6 368.2h2.4M557.2 369.8h2.4M555.6 371.4h2.4M555.6 373.0h2.4M555.6 374.6h2.4M555.6 376.2h2.4M555.6 382.6h2.4M555.6 384.2h2.4M555.6 385.8h2.4M555.6 387.4h2.4M557.2 389.0h2.4M555.6 390.6h2.4M555.6 395.4h2.4M557.2 397.0h2.4" stroke="#569cd6" stroke-opacity="0.60" stroke-width="0.95" stroke-dasharray="1.5 0.5 2.3 0.5 0.9 0.5" fill="none"/><path d="M558.8 270.6h12.3M558.8 272.2h12.1M560.4 273.8h18.9M558.8 275.4h15.7M560.4 277.0h19.3M558.8 278.6h15.4M558.8 280.2h18.6M558.8 281.8h20.0M558.8 285.0h17.7M558.8 286.6h13.5M558.8 288.2h17.3M558.8 289.8h12.1M558.8 291.4h19.3M558.8 293.0h14.1M558.8 294.6h18.5M558.8 299.4h12.7M558.8 301.0h12.9M560.4 302.6h17.4M560.4 304.2h18.6M558.8 305.8h18.4M560.4 307.4h19.7M558.8 309.0h17.9M560.4 310.6h19.1M558.8 317.0h17.2M560.4 318.6h13.2M558.8 320.2h15.9M560.4 321.8h15.8M560.4 323.4h17.4M558.8 328.2h17.4M558.8 329.8h13.4M558.8 331.4h15.7M558.8 333.0h19.5M558.8 334.6h19.5M558.8 336.2h14.0M558.8 337.8h13.4M558.8 342.6h18.9M560.4 344.2h16.2M560.4 345.8h19.1M560.4 349.0h14.5M558.8 350.6h14.2M558.8 352.2h19.1M558.8 353.8h19.2M558.8 355.4h17.8M560.4 357.0h16.5M558.8 358.6h12.3M558.8 360.2h18.6M558.8 361.8h13.8M558.8 365.0h16.2M558.8 366.6h14.7M558.8 368.2h16.3M560.4 369.8h17.5M558.8 371.4h15.9M558.8 373.0h14.4M558.8 374.6h14.8M558.8 376.2h16.9M558.8 382.6h18.0M558.8 384.2h15.8M558.8 385.8h12.8M558.8 387.4h14.5M560.4 389.0h15.6M558.8 390.6h16.3M558.8 395.4h16.9M560.4 397.0h14.5" stroke="#c4c4c4" stroke-opacity="0.62" stroke-width="0.95" stroke-dasharray="1.5 0.5 2.3 0.5 0.9 0.5" fill="none"/><path d="M571.9 270.6h6.8M571.7 272.2h6.7M580.1 273.8h1.9M575.3 275.4h6.2M580.5 277.0h1.5M575.0 278.6h5.2M578.2 280.2h3.8M579.6 281.8h2.4M577.3 285.0h4.7M573.1 286.6h8.2M576.9 288.2h5.1M571.7 289.8h7.7M578.9 291.4h3.1M573.7 293.0h6.0M572.3 299.4h7.4M572.5 301.0h7.2M578.6 302.6h3.4M579.8 304.2h2.2M578.0 305.8h4.0M580.9 307.4h1.1M577.5 309.0h4.5M580.3 310.6h1.7M576.8 317.0h5.2M574.4 318.6h6.1M575.5 320.2h6.5M578.6 323.4h3.4M577.0 328.2h5.0M573.0 329.8h5.2M575.3 331.4h6.7M579.1 333.0h2.9M579.1 334.6h2.9M573.6 336.2h6.2M573.0 337.8h6.6M578.5 342.6h3.5M577.4 344.2h4.6M575.7 349.0h5.3M573.8 350.6h6.0M578.8 353.8h3.2M577.4 355.4h4.6M577.7 357.0h4.3M571.9 358.6h8.0M578.2 360.2h3.8M573.4 361.8h6.4M575.8 365.0h6.2M574.3 366.6h5.9M578.7 369.8h3.3M574.0 373.0h8.0M574.4 374.6h7.6M576.5 376.2h5.5M577.6 382.6h4.4M575.4 384.2h6.6M572.4 385.8h7.5M574.1 387.4h6.2M576.8 389.0h5.2M575.9 390.6h6.1" stroke="#c8c08a" stroke-opacity="0.60" stroke-width="0.95" stroke-dasharray="1.5 0.5 2.3 0.5 0.9 0.5" fill="none"/><path d="M578.8 272.2h3.2M577.0 321.8h5.0M578.6 329.8h3.4M575.7 397.0h5.1" stroke="#c08a60" stroke-opacity="0.55" stroke-width="0.95" stroke-dasharray="1.5 0.5 2.3 0.5 0.9 0.5" fill="none"/><path d="M581.9 275.4h0.1M579.8 289.8h2.2M578.1 294.6h3.9M580.1 299.4h1.9M580.9 318.6h1.1M578.7 352.2h3.3M580.8 387.4h1.2" stroke="#4ec9b0" stroke-opacity="0.55" stroke-width="0.95" stroke-dasharray="1.5 0.5 2.3 0.5 0.9 0.5" fill="none"/><path d="M581.7 286.6h0.3M580.0 301.0h2.0M580.3 336.2h1.7M580.0 337.8h2.0M580.3 345.8h1.7M581.4 349.0h0.6M580.2 358.6h1.8M580.3 361.8h1.7M580.6 366.6h1.4M575.9 368.2h4.1M575.5 371.4h4.8" stroke="#b8b8b8" stroke-opacity="0.55" stroke-width="0.95" stroke-dasharray="1.5 0.5 2.3 0.5 0.9 0.5" fill="none"/><path d="M555.6 297.8h14.9M555.6 315.4h9.2M555.6 326.6h19.7M555.6 341.0h19.1M555.6 381.0h10.0M555.6 393.8h8.3" stroke="#6a9955" stroke-opacity="0.55" stroke-width="0.95" stroke-dasharray="1.5 0.5 2.3 0.5 0.9 0.5" fill="none"/></g>
<g transform="translate(601.2,35.4) scale(0.8250)"><rect x="0" y="0" width="16" height="16" fill="#ffffff"/><path d="M6 8.2 L9 4.5 M6 8.2 L9 11.5" stroke="#b8b8b8" stroke-width="0.9" fill="none"/><rect x="1.6" y="5.4" width="5" height="5.4" fill="#6aaa2e"/><rect x="9" y="2" width="5" height="5" fill="#6aaa2e"/><rect x="9" y="9" width="5.2" height="5.2" fill="#e2802f"/></g>
<path d="M740.7 38.5 l6.6 6.6 M747.3 38.5 l-6.6 6.6" stroke="#a8a8a8" stroke-width="1" fill="none"/>
<path d="M770.20 38.65 h7.2" stroke="#b8b8b8" stroke-width="1.25" fill="none"/>
<path d="M770.20 40.95 h4.6" stroke="#b8b8b8" stroke-width="1.25" fill="none"/>
<path d="M770.20 43.25 h7.2" stroke="#b8b8b8" stroke-width="1.25" fill="none"/>
<path d="M770.20 45.55 h4.0" stroke="#b8b8b8" stroke-width="1.25" fill="none"/>
<g fill="#c5c5c5"><circle cx="1002.9" cy="41.9" r="0.85"/><circle cx="1007" cy="41.9" r="0.85"/><circle cx="1011.1" cy="41.9" r="0.85"/></g>
<g fill="none" stroke="#c5c5c5" stroke-width="1" stroke-linecap="round" stroke-linejoin="round"><circle cx="946.6" cy="411.6" r="3.5"/><path d="M944.1 414.3 L940.6 418.2"/><path d="M960.6 409.6 h11 M960.6 412.6 h11 M960.6 415.6 h5.6 M960.6 418.6 h5.6 M968.2 415.5 l3.2 3.2 M971.4 415.5 l-3.2 3.2" stroke-width="0.9"/><path d="M983.2 415.4 L987 411.6 L990.8 415.4"/><path d="M1004.4 410.2 l6.6 6.6 M1011 410.2 l-6.6 6.6"/></g>
<path d="M185.4 517.6 L189.8 522 L185.4 526.4" fill="none" stroke="#d0d0d0" stroke-width="1.3"/>
<path d="M9.9 535.5 l3.3 3.5 l-3.3 3.5 M17.5 533.2 l-3.3 3.5 l3.3 3.5" fill="none" stroke="#fff" stroke-width="1.1"/>
<g fill="none" stroke="#fff" stroke-width="0.95"><circle cx="34.9" cy="535.4" r="1.45"/><circle cx="34.9" cy="543.6" r="1.45"/><circle cx="39.7" cy="537.3" r="1.45"/><path d="M34.9 536.9 V542.1 M39.7 538.8 c0 2.2 -2.4 2.2 -4.8 2.6"/></g>
<g><circle cx="140.4" cy="538.7" r="4.1" fill="none" stroke="#fff" stroke-width="1.1"/><path d="M134.2 537.6 h4.2 l-2.1 3 z M142.4 539.8 h4.2 l-2.1 -3 z" fill="#fff" stroke="#007acc" stroke-width="0.5"/></g>
<g fill="none" stroke="#fff" stroke-width="1.1"><circle cx="186.8" cy="539.4" r="4.5"/><path d="M184.7 537.3 l4.2 4.2 M188.9 537.3 l-4.2 4.2"/></g>
<g fill="none" stroke="#fff" stroke-width="0.95" stroke-linejoin="round"><path d="M208.8 534.8 L213.6 543.6 H204 Z"/><path d="M208.8 538 v2.8 M208.8 541.6 v0.8"/></g>
<g fill="none" stroke="#fff" stroke-width="0.9" stroke-linecap="round"><path d="M241 536.4 l-2.6 7.6 M241 536.4 l2.6 7.6 M239.4 541.4 h3.2"/><path d="M238.4 534.6 a3.6 3.6 0 0 0 0 4.4 M243.6 534.6 a3.6 3.6 0 0 1 0 4.4 M236.6 533.6 a5.6 5.6 0 0 0 0 6.4 M245.4 533.6 a5.6 5.6 0 0 1 0 6.4"/></g>
<g fill="none" stroke="#fff" stroke-width="0.95" stroke-linejoin="round"><path d="M271.2 538.6 V535 L278.6 539.6 L274.6 542.2"/><ellipse cx="270.4" cy="542" rx="1.7" ry="2.1"/><path d="M267.4 540.8 h1.3 M272.1 540.8 h1.3 M267.4 543.4 h1.3 M272.1 543.4 h1.3" stroke-width="0.7"/></g>
<g fill="none" stroke="#fff" stroke-width="0.95" stroke-linejoin="round"><path d="M1004 542 h8.6 l-1.2 -1.6 v-3 a3.1 3.1 0 0 0 -6.2 0 v3 z"/><path d="M1007.2 543.4 a1.2 1.2 0 0 0 2.2 0"/></g><circle cx="1011.6" cy="536" r="2" fill="#fff"/>
</svg>
</body></html>
